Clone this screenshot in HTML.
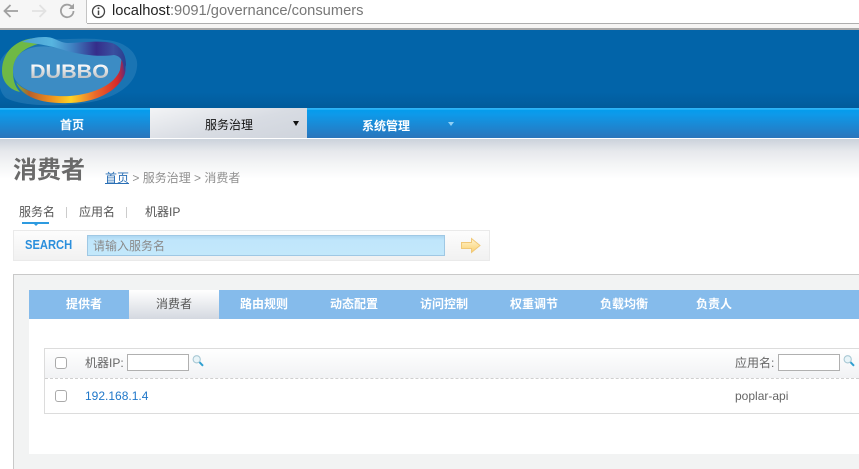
<!DOCTYPE html>
<html lang="zh"><head><meta charset="utf-8"><title>消费者</title>
<style>
html,body{margin:0;padding:0;background:#fff}
body{width:859px;height:469px;overflow:hidden;position:relative;font-family:"Liberation Sans","Noto Sans CJK SC",sans-serif;font-size:12px;color:#555}
.a{position:absolute;white-space:nowrap}
.t{line-height:16px;height:16px}
.nav{color:#fff;font-weight:bold;font-size:12px}
.tab{top:296px;color:#fff;font-size:12px;font-weight:bold;line-height:16px}
.cb{width:10px;height:10px;border:1px solid #aaa;border-radius:3px;background:#fff}
.inp{width:60px;height:15px;border:1px solid #b0b0b0;background:#fff}
</style></head><body>
<!-- browser chrome -->
<div class="a" style="left:0;top:0;width:859px;height:23px;background:#fff"></div>
<div class="a" style="left:0;top:0;width:87px;height:29px;background:#f6f6f6"></div>
<div class="a" style="left:87px;top:23px;width:772px;height:6px;background:#f6f5f4;border-top:1px solid #aeaeae;box-sizing:border-box"></div>
<div class="a" style="left:86px;top:0;width:1px;height:23px;background:#c4c4c4"></div>
<div class="a" style="left:0;top:28px;width:859px;height:2px;background:#a9a9a9"></div>
<svg class="a" style="left:0;top:0" width="86" height="26" viewBox="0 0 86 26" fill="none">
<path d="M18 11H5M10.500 5L4.500 11l6 6" stroke="#a0a0a0" stroke-width="1.800"/>
<path d="M32 11H45M39.500 5l6 6-6 6" stroke="#e2e2e2" stroke-width="1.800"/>
<path d="M73.500 11a6.300 6.300 0 1 1-2-4.700" stroke="#a0a0a0" stroke-width="1.800"/>
<path d="M74 3.500V9h-5.500z" fill="#a0a0a0"/>
</svg>
<svg class="a" style="left:91px;top:4px" width="15" height="15" viewBox="0 0 15 15" fill="none">
<circle cx="7.500" cy="7.500" r="6" stroke="#444" stroke-width="1.300"/>
<path d="M7.500 6.500V11" stroke="#444" stroke-width="1.500"/><circle cx="7.500" cy="4.300" r="1" fill="#444"/>
</svg>
<div class="a" style="left:112px;top:2px;font-size:14.700px;line-height:19px;color:#777"><span style="color:#222">localhost</span>:9091/governance/consumers</div>
<!-- header -->
<div class="a" style="left:0;top:30px;width:859px;height:78px;background:linear-gradient(#0264a9 0,#0264a9 80%,#015b9b 100%)"></div>
<svg class="a" style="left:0;top:30px" width="150" height="78" viewBox="0 30 150 78">
<defs>
<linearGradient id="top" gradientUnits="userSpaceOnUse" x1="20" x2="126" y1="0" y2="0"><stop offset="0" stop-color="#4d9fd0"/><stop offset=".3" stop-color="#57b5e0"/><stop offset=".5" stop-color="#3f7fc0"/><stop offset=".72" stop-color="#352d8a"/><stop offset=".88" stop-color="#3a4f9f"/><stop offset="1" stop-color="#2a3f8f"/></linearGradient>
<linearGradient id="bot" gradientUnits="userSpaceOnUse" x1="16" x2="126" y1="0" y2="0"><stop offset="0" stop-color="#6cb642"/><stop offset=".12" stop-color="#b5602c"/><stop offset=".3" stop-color="#ec8a1e"/><stop offset=".5" stop-color="#fdd326"/><stop offset=".72" stop-color="#ea6a2a"/><stop offset=".92" stop-color="#d92a2a"/><stop offset="1" stop-color="#5a2a80"/></linearGradient>
<linearGradient id="txt" gradientUnits="userSpaceOnUse" x1="0" x2="0" y1="64" y2="78"><stop offset="0" stop-color="#fff"/><stop offset="1" stop-color="#bfc2c5"/></linearGradient>
</defs>
<path d="M-2 72C-3 52 20 40 50 39C70 40 85 37 105 40C125 41 139 53 137 67C135 88 110 100 85 103C55 107 20 106 6 98C-1 92-1 82-2 72Z" fill="#3f8dc4" opacity=".4"/>
<path d="M13 71C13 52 30 44 52 47C70 50 88 52 104 48C116 46 122 55 122 66C122 82 100 93 72 96C42 98 13 90 13 71Z" fill="#3c8cc4"/>
<path d="M36 38C16 39 2 52 2 71C2 82 10 90 20 92C14 86 13 78 13 71C13 56 24 48 38 44Z" fill="#6fb945"/>
<path d="M16 82C24 92 45 97 70 96C95 94 115 84 120 70L122 56C126 62 127 72 123 78C113 95 90 103 68 103C44 104 22 98 16 82Z" fill="url(#bot)"/>
<path d="M22 42C32 37 45 36 52 38C58 40 62 43 68 43C80 43 100 40 112 43C122 47 126 55 126 65L124 72C124 62 121 56 114 55C100 57 82 55 67 51C55 47 42 44 22 42Z" fill="url(#top)"/>
<text x="30" y="78" font-family="Liberation Sans, sans-serif" font-size="19.500" font-weight="bold" fill="url(#txt)" textLength="79" lengthAdjust="spacingAndGlyphs">DUBBO</text>
</svg>
<!-- nav -->
<div class="a" style="left:0;top:108px;width:859px;height:30px;background:linear-gradient(#2db4f7 0,#2db4f7 1.500px,#059cec 2px,#0d9aea 20%,#2a75bb 100%)"></div>
<div class="a" style="left:0;top:138px;width:859px;height:1px;background:#fff"></div>
<div class="a" style="left:150px;top:108px;width:157px;height:30px;background:linear-gradient(165deg,#f3f4f6 0,#d8dce3 55%,#cfd4dc 100%)"></div>
<div class="a t nav" style="left:60px;top:117px">首页</div>
<div class="a t" style="left:205px;top:117px;color:#111;font-size:12px">服务治理</div>
<div class="a" style="left:293px;top:121px;width:0;height:0;border-left:3px solid transparent;border-right:3px solid transparent;border-top:5px solid #111"></div>
<div class="a t nav" style="left:362px;top:118px">系统管理</div>
<div class="a" style="left:448px;top:122px;width:0;height:0;border-left:3px solid transparent;border-right:3px solid transparent;border-top:4px solid #8fd0f5"></div>
<!-- page gradient -->
<div class="a" style="left:0;top:139px;width:859px;height:40px;background:linear-gradient(#cbd2db 0,#e6e8ec 30%,#f4f5f6 65%,#fff 100%)"></div>
<div class="a" style="left:13px;top:155px;font-size:24px;line-height:32px;font-weight:bold;color:#6a6a6a">消费者</div>
<div class="a t" style="left:105px;top:170px;color:#8f8f8f"><span style="color:#2a6fb5;text-decoration:underline">首页</span> &gt; 服务治理 &gt; 消费者</div>
<!-- filter tabs -->
<div class="a t" style="left:19px;top:204px;color:#555">服务名</div>
<div class="a" style="left:66px;top:207px;width:1px;height:11px;background:#ccc"></div>
<div class="a t" style="left:79px;top:204px;color:#555">应用名</div>
<div class="a" style="left:126px;top:207px;width:1px;height:11px;background:#ccc"></div>
<div class="a t" style="left:145px;top:204px;color:#555">机器IP</div>
<div class="a" style="left:22px;top:222px;width:27px;height:2px;background:#2e9be0"></div>
<div class="a" style="left:34px;top:224px;width:0;height:0;border-left:2px solid transparent;border-right:2px solid transparent;border-top:2px solid #2e9be0"></div>
<!-- search -->
<div class="a" style="left:13px;top:230px;width:475px;height:29px;border:1px solid #eaeaea;background:linear-gradient(#fdfdfd,#f1f1f1)"></div>
<div class="a" style="left:25px;top:237px;font-size:13px;line-height:16px;font-weight:bold;color:#2b8fdc;transform:scaleX(.86);transform-origin:0 50%">SEARCH</div>
<div class="a" style="left:87px;top:235px;width:358px;height:21px;background:linear-gradient(#a9d4f0,#c0e6fb 25%,#c3e8fb);box-shadow:inset 0 0 0 1px #9fc8e4"></div>
<div class="a t" style="left:93px;top:238px;color:#8a8a8a;font-size:12px">请输入服务名</div>
<svg class="a" style="left:460px;top:237px" width="22" height="18" viewBox="0 0 22 18">
<defs><linearGradient id="ar" x1="0" x2="0" y1="0" y2="1"><stop offset="0" stop-color="#fff4d0"/><stop offset="1" stop-color="#fbd070"/></linearGradient></defs>
<path d="M1.500 5.500H11.500V1.500L20 8.500L11.500 15.500V11.500H1.500Z" fill="url(#ar)" stroke="#f0c878" stroke-width="1"/>
</svg>
<!-- panel -->
<div class="a" style="left:13px;top:274px;width:846px;height:195px;background:#f2f3f3;border-left:1px solid #c9c9c9;border-top:1px solid #c9c9c9;box-sizing:border-box"></div>
<div class="a" style="left:29px;top:319px;width:830px;height:135px;background:#fff"></div>
<div class="a" style="left:29px;top:290px;width:830px;height:29px;background:#85bbeb"></div>
<div class="a" style="left:129px;top:290px;width:90px;height:29px;background:linear-gradient(#fff,#eceef1 45%,#d4d8e0)"></div>
<div class="a tab" style="left:66px">提供者</div>
<div class="a tab" style="left:156px;color:#555;font-weight:normal">消费者</div>
<div class="a tab" style="left:240px">路由规则</div>
<div class="a tab" style="left:330px">动态配置</div>
<div class="a tab" style="left:420px">访问控制</div>
<div class="a tab" style="left:510px">权重调节</div>
<div class="a tab" style="left:600px">负载均衡</div>
<div class="a tab" style="left:696px">负责人</div>
<!-- table -->
<div class="a" style="left:44px;top:348px;width:815px;height:66px;border:1px solid #dcdcdc;border-right:0;box-sizing:border-box;background:#fff"></div>
<div class="a" style="left:45px;top:349px;width:814px;height:29px;background:linear-gradient(#fff,#f1f2f4);border-bottom:1px dashed #cfcfcf"></div>
<div class="a cb" style="left:55px;top:357px"></div>
<div class="a cb" style="left:55px;top:390px"></div>
<div class="a t" style="left:85px;top:355px;color:#666">机器IP:</div>
<div class="a inp" style="left:127px;top:354px"></div>
<div class="a t" style="left:735px;top:355px;color:#666">应用名:</div>
<div class="a inp" style="left:778px;top:354px"></div>
<svg class="a" style="left:192px;top:355px" width="13" height="13" viewBox="0 0 13 13"><circle cx="4.700" cy="4.300" r="3.600" fill="#e8f4f8" stroke="#a8c8d4" stroke-width="1.100"/><path d="M7.500 7.200l3.500 3.600" stroke="#2f9fd0" stroke-width="2"/></svg>
<svg class="a" style="left:843px;top:355px" width="13" height="13" viewBox="0 0 13 13"><circle cx="4.700" cy="4.300" r="3.600" fill="#e8f4f8" stroke="#a8c8d4" stroke-width="1.100"/><path d="M7.500 7.200l3.500 3.600" stroke="#2f9fd0" stroke-width="2"/></svg>
<div class="a t" style="left:85px;top:388px;color:#1f77c9">192.168.1.4</div>
<div class="a t" style="left:735px;top:388px;color:#666">poplar-api</div>
</body></html>
